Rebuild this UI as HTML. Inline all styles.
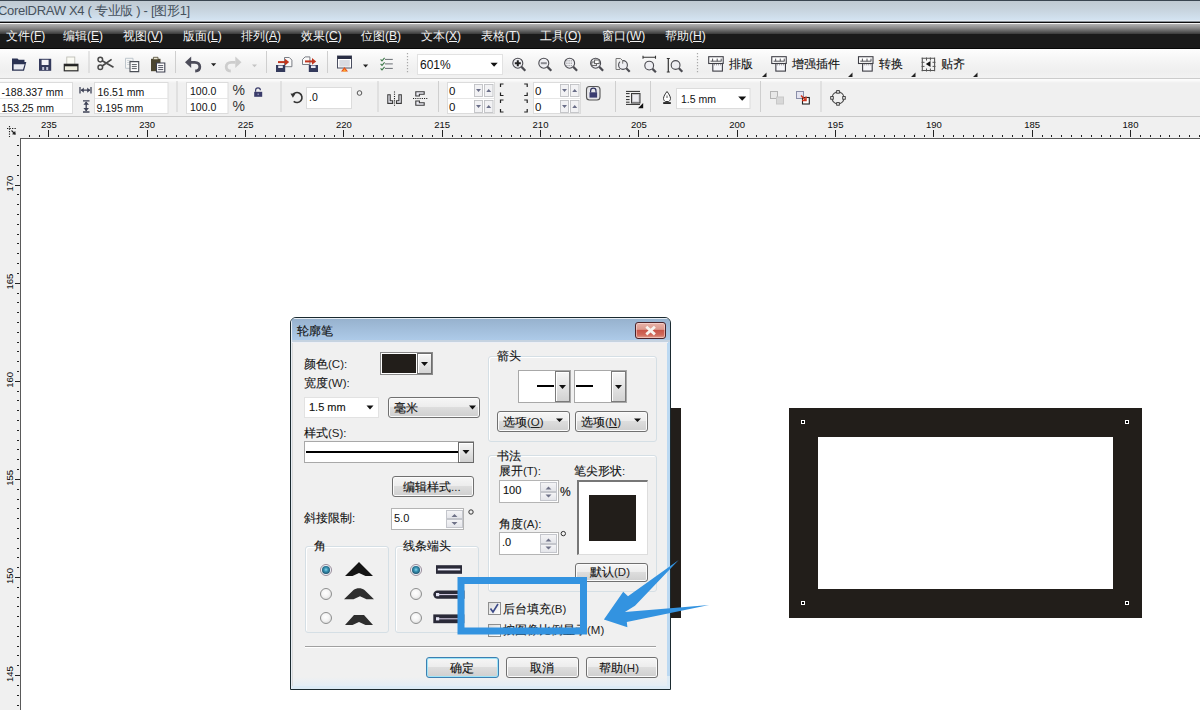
<!DOCTYPE html>
<html><head><meta charset="utf-8">
<style>
*{margin:0;padding:0;box-sizing:border-box}
html,body{width:1200px;height:710px;overflow:hidden}
body{position:relative;background:#fff;font-family:"Liberation Sans",sans-serif;font-size:12px;color:#000}
.a{position:absolute}
.t{position:absolute;white-space:nowrap;line-height:1}
svg{position:absolute;overflow:visible}
</style></head><body>

<!-- title bar -->
<div class="a" style="left:0;top:0;width:1200px;height:22px;background:linear-gradient(#3a4550 0,#3a4550 1px,#c0cad2 1px,#c6d2dc 40%,#d3e3f1 20px,#e2eaf2 20px,#e2eaf2 21px,#8a9299 21px)"></div>
<div class="t" style="left:-2px;top:4px;font-size:13px;color:#46525e;letter-spacing:-0.3px">CorelDRAW X4 ( 专业版 ) - [图形1]</div>

<!-- menu bar -->
<div class="a" style="left:0;top:22px;width:1200px;height:27px;background:linear-gradient(#0c0c0c 0,#0c0c0c 1px,#f4f4f4 1px,#f4f4f4 2px,#b4b4b4 2px,#8a8a8a 6px,#3a3a3a 12px,#1a1a1a 12px,#1a1a1a 26px,#080808 26px)"></div>
<div id="menu" style="color:#f2f2f2;font-size:12px">
<div class="t" style="left:6px;top:30px">文件(<u>F</u>)</div>
<div class="t" style="left:63px;top:30px">编辑(<u>E</u>)</div>
<div class="t" style="left:123px;top:30px">视图(<u>V</u>)</div>
<div class="t" style="left:183px;top:30px">版面(<u>L</u>)</div>
<div class="t" style="left:241px;top:30px">排列(<u>A</u>)</div>
<div class="t" style="left:301px;top:30px">效果(<u>C</u>)</div>
<div class="t" style="left:361px;top:30px">位图(<u>B</u>)</div>
<div class="t" style="left:421px;top:30px">文本(<u>X</u>)</div>
<div class="t" style="left:481px;top:30px">表格(<u>T</u>)</div>
<div class="t" style="left:540px;top:30px">工具(<u>O</u>)</div>
<div class="t" style="left:602px;top:30px">窗口(<u>W</u>)</div>
<div class="t" style="left:665px;top:30px">帮助(<u>H</u>)</div>
</div>

<!-- toolbar 1 -->
<div class="a" style="left:0;top:49px;width:1200px;height:30px;background:linear-gradient(#fefefe 0,#f6f6f6 10px,#efefef 22px,#f2f2f2 100%);border-bottom:1px solid #cccccc"></div>

<!-- toolbar1 icons -->
<svg style="left:0;top:0" width="1200" height="80">
<g fill="none">
<!-- grip left -->
<!-- open folder -->
<path d="M12 58.5h5.5l1.2 1.3h5.8v3H12z" fill="#2a3252"/>
<path d="M12 62h14.3l-2.3 8.8H12z" fill="#2a3252"/>
<path d="M13.6 64.2h11l-1.6 5.2h-9.4z" fill="#e9ebf2"/>
<!-- save -->
<rect x="39" y="58.8" width="12.2" height="12" fill="#343a5c"/>
<rect x="41.6" y="59.8" width="7" height="5.2" fill="#f4f4f8"/>
<rect x="42.2" y="67" width="2" height="3" fill="#c0c4d8"/>
<rect x="46.2" y="67" width="2" height="3" fill="#c0c4d8"/>
<!-- print -->
<rect x="66.8" y="57" width="8" height="8" fill="#fbfbf4" stroke="#b8b8b0" stroke-width="0.8"/>
<rect x="64.3" y="64.3" width="13.6" height="6.5" fill="#efeee0" stroke="#2c2c2c" stroke-width="1.2"/>
<rect x="64.3" y="64.3" width="13.6" height="2" fill="#222"/>
<!-- separators -->
<rect x="88.5" y="51" width="1" height="22" fill="#cfcfcf"/>
<rect x="175" y="51" width="1" height="22" fill="#cfcfcf"/>
<rect x="266" y="51" width="1" height="22" fill="#cfcfcf"/>
<rect x="327" y="51" width="1" height="22" fill="#cfcfcf"/>
<!-- scissors -->
<circle cx="100.3" cy="59.6" r="2.3" stroke="#4a4a4a" stroke-width="1.5"/>
<circle cx="100.3" cy="67.2" r="2.3" stroke="#4a4a4a" stroke-width="1.5"/>
<path d="M102.2 60.8L113.5 67.2M102.2 66L111.6 59.4" stroke="#4a4a4a" stroke-width="1.7"/>
<!-- copy -->
<path d="M125.5 58.3h7.5v10h-7.5z" fill="#f6f6f6" stroke="#b9c2c8" stroke-width="0.9"/>
<path d="M127 60.5h4.5M127 62.5h4.5M127 64.5h4.5" stroke="#c7cfd4" stroke-width="0.8"/>
<path d="M130 61.6h8.7v10H130z" fill="#fff" stroke="#4a4e55" stroke-width="1.1"/>
<path d="M131.8 64.6h5M131.8 66.6h5M131.8 68.6h5" stroke="#4a4e55" stroke-width="0.9"/>
<!-- paste -->
<path d="M151 58.8h9.5v12.4H151z" fill="#4c4631"/>
<path d="M153.4 57.3h4.6v2.4h-4.6z" fill="#e8e4d0" stroke="#4c4631" stroke-width="0.8"/>
<path d="M156.5 63h8.3v9h-8.3z" fill="#fff" stroke="#3e4150" stroke-width="1.1"/>
<path d="M158.2 65.6h5M158.2 67.6h5M158.2 69.6h5" stroke="#3e4150" stroke-width="0.9"/>
<!-- undo -->
<path d="M190.5 62.3h4.3c3 0 5 1.8 5 4.5s-2 4.2-4.6 4.2" stroke="#4d4d5a" stroke-width="2.8"/>
<path d="M185 62.3l6.2-5.8v11.6z" fill="#4d4d5a"/>
<path d="M211 63.2h5.2l-2.6 3z" fill="#222"/>
<!-- redo -->
<path d="M235.5 62.3h-4.3c-3 0-5 1.8-5 4.5s2 4.2 4.6 4.2" stroke="#cdcdcd" stroke-width="2.8"/>
<path d="M241.5 62.3l-6.2-5.8v11.6z" fill="#cdcdcd"/>
<path d="M252 64.4h5l-2.5 2.8z" fill="#c4c4c4"/>
<!-- import -->
<path d="M284.5 57.5h4.8l2.6 2.6v6.6h-7.4z" fill="#fafafa" stroke="#6c7078" stroke-width="0.9"/>
<rect x="276" y="65" width="9.2" height="7" fill="#343a5c"/>
<rect x="278.2" y="65.6" width="4.6" height="2.4" fill="#e9e9f2"/>
<path d="M278 62.1h7" stroke="#c0361e" stroke-width="2"/>
<path d="M289.2 62.1l-4.2-3.3v6.6z" fill="#c0361e"/>
<!-- export -->
<path d="M302.5 59.5l2.6-2.6h4.8v7.6h-7.4z" fill="#fafafa" stroke="#6c7078" stroke-width="0.9"/>
<rect x="308.8" y="65" width="9.2" height="7" fill="#343a5c"/>
<rect x="311" y="65.6" width="4.6" height="2.4" fill="#e9e9f2"/>
<path d="M305 61.4h7" stroke="#c0361e" stroke-width="2"/>
<path d="M316.2 61.4l-4.2-3.3v6.6z" fill="#c0361e"/>
<!-- app launcher -->
<rect x="337.5" y="56" width="14" height="12" fill="#fff" stroke="#4a4e60" stroke-width="1"/>
<rect x="337.5" y="56" width="14" height="3" fill="#2a2e44"/>
<rect x="339.3" y="60" width="10.5" height="6.6" fill="#d9dbe2"/>
<path d="M341 71.5l3.5-4.5 3.5 4.5z" fill="#e8501c"/>
<path d="M342.6 71.5l1.9-2.6 1.9 2.6z" fill="#ffb030"/>
<path d="M363 64.4h5.2l-2.6 3z" fill="#222"/>
<!-- checklist -->
<path d="M380.6 59.3l1.4 1.6 2.6-3M380.6 63.8l1.4 1.6 2.6-3M380.6 68.3l1.4 1.6 2.6-3" stroke="#3f7a4a" stroke-width="1.1"/>
<path d="M385 59.4h7.8M385 63.9h7.8M385 68.4h7.8" stroke="#6a6e74" stroke-width="1"/>
<!-- grip -->
<path d="M407.5 53v21" stroke="#a9a9a9" stroke-width="1.2" stroke-dasharray="1.2 1.8"/>
<path d="M697.5 53v21" stroke="#a9a9a9" stroke-width="1.2" stroke-dasharray="1.2 1.8"/>
<!-- zoom combo -->
<rect x="417.5" y="54.5" width="85" height="20" fill="#fff" stroke="#e2e2e2" stroke-width="1"/>
<path d="M490.5 62.8h7.2l-3.6 4z" fill="#111"/>
<!-- magnifiers -->
<g stroke="#4c4c52" stroke-width="1.1" fill="#eeeef2">
<circle cx="517.8" cy="63.2" r="5"/><path d="M521.5 66.9l3.8 3.8" stroke-width="2.2"/>
<circle cx="543.8" cy="63.2" r="5"/><path d="M547.5 66.9l3.8 3.8" stroke-width="2.2"/>
<circle cx="569.6" cy="63.2" r="5"/><path d="M573.3 66.9l3.8 3.8" stroke-width="2.2"/>
<circle cx="595.6" cy="63.2" r="5"/><path d="M599.3 66.9l3.8 3.8" stroke-width="2.2"/>
<circle cx="623" cy="65" r="4.4"/><path d="M626.3 68.3l3.4 3.4" stroke-width="2.2"/>
<circle cx="649.2" cy="65.6" r="4.4"/><path d="M652.5 68.9l3.4 3.4" stroke-width="2.2"/>
<circle cx="675.6" cy="65" r="4.4"/><path d="M678.9 68.3l3.4 3.4" stroke-width="2.2"/>
</g>
<path d="M514.8 63.2h6M517.8 60.2v6" stroke="#222" stroke-width="2"/>
<path d="M540.8 63.2h6" stroke="#8a8a90" stroke-width="2"/>
<path d="M566.4 60.8h6.4M566.4 63.2h6.4M566.4 65.6h6.4" stroke="#666" stroke-width="0.8" stroke-dasharray="1 1.2"/>
<rect x="591.8" y="62" width="4.6" height="3.6" fill="none" stroke="#555" stroke-width="0.9"/>
<rect x="594.6" y="60" width="4.6" height="3.6" fill="#fff" stroke="#555" stroke-width="0.9"/>
<path d="M616 58.5h4.5l2.2 2.2v3" fill="#eee" stroke="#777" stroke-width="1"/>
<path d="M616 58.5v11h4" stroke="#777" stroke-width="1"/>
<path d="M643 57.3h12.5M643 55.8v3M655.5 55.8v3" stroke="#333" stroke-width="1.1"/>
<path d="M668.3 58.5v13.5M666.8 58.5h3M666.8 72h3" stroke="#333" stroke-width="1.2"/>
<!-- tool bar labels icons -->
<g transform="translate(0.00 0)"><rect x="708.7" y="56.7" width="14.5" height="6.8" fill="#fff" stroke="#3e3e46" stroke-width="1.1"/><path d="M710.5 61.2h11M712.6 58.6v2.6M717.2 58.6v2.6M721.2 58.6v2.6" stroke="#3e3e46" stroke-width="0.9" fill="none"/><rect x="712.8" y="63.5" width="9.6" height="7.6" fill="#f6f6fa" stroke="#3e3e46" stroke-width="1.1"/><path d="M714 64.8h7.5" stroke="#666" stroke-width="0.8" stroke-dasharray="1 1"/></g>
<g transform="translate(63.05 0)"><rect x="708.7" y="56.7" width="14.5" height="6.8" fill="#fff" stroke="#3e3e46" stroke-width="1.1"/><path d="M710.5 61.2h11M712.6 58.6v2.6M717.2 58.6v2.6M721.2 58.6v2.6" stroke="#3e3e46" stroke-width="0.9" fill="none"/><rect x="712.8" y="63.5" width="9.6" height="7.6" fill="#f6f6fa" stroke="#3e3e46" stroke-width="1.1"/><path d="M714 64.8h7.5" stroke="#666" stroke-width="0.8" stroke-dasharray="1 1"/></g>
<g transform="translate(149.80 0)"><rect x="708.7" y="56.7" width="14.5" height="6.8" fill="#fff" stroke="#3e3e46" stroke-width="1.1"/><path d="M710.5 61.2h11M712.6 58.6v2.6M717.2 58.6v2.6M721.2 58.6v2.6" stroke="#3e3e46" stroke-width="0.9" fill="none"/><rect x="712.8" y="63.5" width="9.6" height="7.6" fill="#f6f6fa" stroke="#3e3e46" stroke-width="1.1"/><path d="M714 64.8h7.5" stroke="#666" stroke-width="0.8" stroke-dasharray="1 1"/></g>
<path d="M921.5 58.3h13.5M921.5 70.5h13.5M922.3 57.5v13.8M934.6 57.5v13.8" stroke="#555" stroke-width="1.1" fill="none"/>
<path d="M926.5 57.5v3M930.4 57.5v3M926.5 68.5v3M930.4 68.5v3M921.5 62.3h3M921.5 66.4h3M932.5 62.3h3M932.5 66.4h3" stroke="#555" stroke-width="1" fill="none"/>
<path d="M925.8 64l4.7-3v6z" fill="#111"/>
<path d="M762 77h4.5v-4.5z M848 77h4.5v-4.5z M911 77h4.5v-4.5z M973 77h4.5v-4.5z" fill="#222"/>
</g>
</svg>
<div class="t" style="left:420px;top:59px;font-size:12px;color:#111">601%</div>
<div class="t" style="left:729px;top:58px;font-size:12px;color:#111;-webkit-text-stroke:0.12px #111">排版</div>
<div class="t" style="left:792px;top:58px;font-size:12px;color:#111;-webkit-text-stroke:0.12px #111">增强插件</div>
<div class="t" style="left:879px;top:58px;font-size:12px;color:#111;-webkit-text-stroke:0.12px #111">转换</div>
<div class="t" style="left:941px;top:58px;font-size:12px;color:#111;-webkit-text-stroke:0.12px #111">贴齐</div>

<!-- toolbar 2 -->
<div class="a" style="left:0;top:79px;width:1200px;height:38px;background:linear-gradient(#fcfcfc 0,#fcfcfc 1px,#f0f0f0 4px);border-bottom:1px solid #c9c9c9"></div>


<!-- toolbar2 content -->
<svg style="left:0;top:0" width="1200" height="118">
<g fill="#fff" stroke="#dcdcdc" stroke-width="1">
<rect x="-1" y="82.5" width="73.5" height="31"/>
<rect x="94.5" y="82.5" width="73.5" height="31"/>
<rect x="186.5" y="82.5" width="41.5" height="31"/>
<rect x="306.5" y="87.5" width="45" height="21"/>
<rect x="447.5" y="82.5" width="47" height="31"/>
<rect x="533.5" y="82.5" width="47" height="31"/>
<rect x="676.5" y="88.5" width="73.5" height="20"/>
</g>
<path d="M0 98.5h72M95 98.5h73M187 98.5h41M448 98.5h46M534 98.5h46" stroke="#e6e6e6" stroke-width="1"/>
<g fill="#cfcfcf">
<rect x="176.5" y="81" width="1" height="31"/>
<rect x="280.5" y="81" width="1" height="31"/>
<rect x="377.5" y="81" width="1" height="31"/>
<rect x="438" y="81" width="1" height="31"/>
<rect x="615" y="81" width="1" height="31"/>
<rect x="650" y="81" width="1" height="31"/>
<rect x="760" y="81" width="1" height="31"/>
<rect x="820.5" y="81" width="1" height="31"/>
</g>
<!-- W/H icons -->
<path d="M80 87v6.5M91 87v6.5M81 90.2h9" stroke="#3e4256" stroke-width="1.3"/>
<path d="M80.8 90.2l3-2.6v5.2zM90.2 90.2l-3-2.6v5.2z" fill="#3e4256"/>
<path d="M83 100.8h6.5M83 112h6.5M86.2 102v9" stroke="#3e4256" stroke-width="1.3"/>
<path d="M86.2 101.5l-2.8 3.2h5.6zM86.2 111.3l-2.8-3.2h5.6z" fill="#3e4256"/>
<!-- lock small -->
<path d="M255.6 91.8v-1.6a2.4 2.4 0 0 1 4.8 0" fill="none" stroke="#3a3c6a" stroke-width="1.2"/>
<rect x="254.2" y="91.8" width="8" height="5" fill="#3a3c6a"/><rect x="257.5" y="93.5" width="1.4" height="1.6" fill="#9090b8"/>
<!-- rotate icon -->
<path d="M292.5 95.3a5 5 0 1 1 1.2 6" fill="none" stroke="#333" stroke-width="1.6"/>
<path d="M290.5 93.5l5 0.2-2.6 4z" fill="#333"/>
<!-- mirror icons -->
<path d="M394.5 91.5v15" stroke="#222" stroke-width="1.1" stroke-dasharray="1.1 1.1"/>
<path d="M387.8 94.8h2.4v6h2.4v2.6h-4.8z M401.3 94.8h-2.4v6h-2.4v2.6h4.8z" fill="#ececf4" stroke="#3a3a3a" stroke-width="1.1"/>
<path d="M413 98.5h15" stroke="#222" stroke-width="1.1" stroke-dasharray="1.1 1.1"/>
<path d="M415.8 91.8h8.4v2.4h-4.8v1.8h-3.6z M415.8 105.2h8.4v-2.4h-4.8v-1.8h-3.6z" fill="#ececf4" stroke="#3a3a3a" stroke-width="1.1"/>
<!-- spinners -->
<g fill="#f2f2f4" stroke="#bfc0c4" stroke-width="0.9">
<rect x="474.5" y="84.5" width="8" height="12"/><rect x="484.5" y="84.5" width="8.5" height="12"/>
<rect x="474.5" y="100.5" width="8" height="12"/><rect x="484.5" y="100.5" width="8.5" height="12"/>
<rect x="560.5" y="84.5" width="8" height="12"/><rect x="570.5" y="84.5" width="8.5" height="12"/>
<rect x="560.5" y="100.5" width="8" height="12"/><rect x="570.5" y="100.5" width="8.5" height="12"/>
</g>
<path d="M476 89h5l-2.5 3zM476 105h5l-2.5 3zM562 89h5l-2.5 3zM562 105h5l-2.5 3z" fill="#6a6e88"/>
<path d="M486.2 92h5l-2.5-3zM486.2 108h5l-2.5-3zM572.2 92h5l-2.5-3zM572.2 108h5l-2.5-3z" fill="#6a6e88"/>
<!-- brackets -->
<path d="M503.5 84h-3v3M500.5 92.5v3h3M503.5 100h-3v3M500.5 109v3h3M524.2 84h3v3M527.2 92.5v3h-3M524.2 100h3v3M527.2 109v3h-3" fill="none" stroke="#222" stroke-width="1.2"/>
<!-- lock button -->
<rect x="586.5" y="86.5" width="13.5" height="13.5" rx="3" fill="#e6e6ea" stroke="#555" stroke-width="1.1"/>
<path d="M590.6 92.5v-1.6a2.7 2.7 0 0 1 5.4 0v1.6" fill="none" stroke="#303460" stroke-width="1.2"/>
<rect x="589.5" y="92.3" width="7.6" height="5.3" fill="#3a3c70"/>
<!-- wrap text icon -->
<path d="M626 91.4h14M626 104.4h14M626 93.6h3.6M626 96.6h3.6M626 99.6h3.6M626 102.2h3.6" stroke="#2a2a2a" stroke-width="1"/>
<rect x="631.5" y="93.5" width="8.5" height="9.5" fill="#c4c4c8" stroke="#3a3a3a" stroke-width="1"/>
<rect x="633" y="95" width="5.5" height="6.5" fill="#ececf0"/>
<path d="M643.2 108.2v-5.2l-5.2 5.2z" fill="#111"/>
<!-- pen nib -->
<path d="M667 91.5c-1.6 2-3.5 5-3.5 7 0 1.5 1 2.6 2 3h3c1-.4 2-1.5 2-3 0-2-1.9-5-3.5-7z" fill="#fff" stroke="#333" stroke-width="1"/>
<path d="M667 95.5v2.5" stroke="#555" stroke-width="1"/>
<rect x="663.2" y="102.2" width="7.6" height="1.7" fill="#111"/>
<!-- combo arrow -->
<path d="M738.2 96.6h8l-4 4.2z" fill="#111"/>
<!-- order icons -->
<rect x="770.5" y="91.5" width="7" height="7" fill="#e8e8e8" stroke="#b4b4b4" stroke-width="1"/>
<rect x="776.5" y="97" width="7" height="7" fill="#d8d8d8" stroke="#c8c8c8" stroke-width="1"/>
<rect x="796.5" y="91.5" width="7" height="7" fill="#e4e4f0" stroke="#8a8ea8" stroke-width="1"/>
<rect x="802.5" y="97.5" width="6.8" height="6.5" fill="#fff" stroke="#222" stroke-width="1.1"/>
<path d="M801 95.5l4.5 4.5M806 96.5v4h-4" fill="none" stroke="#d03820" stroke-width="1.5"/>
<circle cx="359.5" cy="93" r="2.3" fill="none" stroke="#555" stroke-width="1"/>
<!-- circle nodes -->
<circle cx="838" cy="97.9" r="6" fill="none" stroke="#555" stroke-width="1.1"/>
<g fill="#f4f4f4" stroke="#333" stroke-width="0.9"><rect x="836.7" y="90.6" width="2.6" height="2.6"/><rect x="836.7" y="102.6" width="2.6" height="2.6"/><rect x="830.7" y="96.6" width="2.6" height="2.6"/><rect x="842.7" y="96.6" width="2.6" height="2.6"/></g>
</svg>
<div style="font-size:10.5px;color:#111">
<div class="t" style="left:1.5px;top:86.5px">-188.337 mm</div>
<div class="t" style="left:1.5px;top:102.5px">153.25 mm</div>
<div class="t" style="left:97.5px;top:86.5px">16.51 mm</div>
<div class="t" style="left:96.5px;top:102.5px">9.195 mm</div>
<div class="t" style="left:190px;top:86px">100.0</div>
<div class="t" style="left:190px;top:102px">100.0</div>
<div class="t" style="left:232.5px;top:82.5px;font-size:14px;color:#333">%</div>
<div class="t" style="left:232.5px;top:99px;font-size:14px;color:#333">%</div>
<div class="t" style="left:309px;top:91.5px">.0</div>

<div class="t" style="left:449px;top:86px;font-size:11.5px">0</div>
<div class="t" style="left:449px;top:102px;font-size:11.5px">0</div>
<div class="t" style="left:535px;top:86px;font-size:11.5px">0</div>
<div class="t" style="left:535px;top:102px;font-size:11.5px">0</div>
<div class="t" style="left:681px;top:93.5px;font-size:10.5px">1.5 mm</div>
</div>

<!-- rulers -->
<div class="a" style="left:0;top:117px;width:1200px;height:21px;background:#f0f0f0"></div>
<div class="a" style="left:0;top:117px;width:21px;height:593px;background:#f0f0f0"></div>
<div class="a" style="left:20px;top:138px;width:1180px;height:1px;background:#5a5a5a"></div>
<div class="a" style="left:20px;top:138px;width:1px;height:572px;background:#5a5a5a"></div>

<svg style="left:0;top:0" width="1200" height="710">
<path d="M29.5 135v2 M39.5 135v2 M48.5 130v7 M58.5 135v2 M68.5 135v2 M78.5 135v2 M88.5 135v2 M98.5 135v2 M107.5 135v2 M117.5 135v2 M127.5 135v2 M137.5 135v2 M147.5 130v7 M157.5 135v2 M166.5 135v2 M176.5 135v2 M186.5 135v2 M196.5 135v2 M206.5 135v2 M216.5 135v2 M225.5 135v2 M235.5 135v2 M245.5 130v7 M255.5 135v2 M265.5 135v2 M275.5 135v2 M284.5 135v2 M294.5 135v2 M304.5 135v2 M314.5 135v2 M324.5 135v2 M334.5 135v2 M343.5 130v7 M353.5 135v2 M363.5 135v2 M373.5 135v2 M383.5 135v2 M393.5 135v2 M402.5 135v2 M412.5 135v2 M422.5 135v2 M432.5 135v2 M442.5 130v7 M452.5 135v2 M461.5 135v2 M471.5 135v2 M481.5 135v2 M491.5 135v2 M501.5 135v2 M511.5 135v2 M520.5 135v2 M530.5 135v2 M540.5 130v7 M550.5 135v2 M560.5 135v2 M570.5 135v2 M579.5 135v2 M589.5 135v2 M599.5 135v2 M609.5 135v2 M619.5 135v2 M629.5 135v2 M638.5 130v7 M648.5 135v2 M658.5 135v2 M668.5 135v2 M678.5 135v2 M688.5 135v2 M697.5 135v2 M707.5 135v2 M717.5 135v2 M727.5 135v2 M737.5 130v7 M747.5 135v2 M756.5 135v2 M766.5 135v2 M776.5 135v2 M786.5 135v2 M796.5 135v2 M806.5 135v2 M815.5 135v2 M825.5 135v2 M835.5 130v7 M845.5 135v2 M855.5 135v2 M865.5 135v2 M874.5 135v2 M884.5 135v2 M894.5 135v2 M904.5 135v2 M914.5 135v2 M924.5 135v2 M933.5 130v7 M943.5 135v2 M953.5 135v2 M963.5 135v2 M973.5 135v2 M983.5 135v2 M992.5 135v2 M1002.5 135v2 M1012.5 135v2 M1022.5 135v2 M1032.5 130v7 M1042.5 135v2 M1051.5 135v2 M1061.5 135v2 M1071.5 135v2 M1081.5 135v2 M1091.5 135v2 M1101.5 135v2 M1110.5 135v2 M1120.5 135v2 M1130.5 130v7 M1140.5 135v2 M1150.5 135v2 M1160.5 135v2 M1169.5 135v2 M1179.5 135v2 M1189.5 135v2 M1199.5 135v2 M17 145.5h2 M17 155.5h2 M17 165.5h2 M17 175.5h2 M15 185.5h5 M17 194.5h2 M17 204.5h2 M17 214.5h2 M17 224.5h2 M17 234.5h2 M17 243.5h2 M17 253.5h2 M17 263.5h2 M17 273.5h2 M15 283.5h5 M17 293.5h2 M17 302.5h2 M17 312.5h2 M17 322.5h2 M17 332.5h2 M17 342.5h2 M17 351.5h2 M17 361.5h2 M17 371.5h2 M15 381.5h5 M17 391.5h2 M17 400.5h2 M17 410.5h2 M17 420.5h2 M17 430.5h2 M17 440.5h2 M17 449.5h2 M17 459.5h2 M17 469.5h2 M15 479.5h5 M17 489.5h2 M17 499.5h2 M17 508.5h2 M17 518.5h2 M17 528.5h2 M17 538.5h2 M17 548.5h2 M17 557.5h2 M17 567.5h2 M15 577.5h5 M17 587.5h2 M17 597.5h2 M17 606.5h2 M17 616.5h2 M17 626.5h2 M17 636.5h2 M17 646.5h2 M17 655.5h2 M17 665.5h2 M15 675.5h5 M17 685.5h2 M17 695.5h2 M17 705.5h2" stroke="#222" stroke-width="1" fill="none"/>
<text x="48.9" y="128.4" font-size="9.5" text-anchor="middle" fill="#111" stroke="#111" stroke-width="0.05" font-family="Liberation Sans">235</text>
<text x="147.2" y="128.4" font-size="9.5" text-anchor="middle" fill="#111" stroke="#111" stroke-width="0.05" font-family="Liberation Sans">230</text>
<text x="245.6" y="128.4" font-size="9.5" text-anchor="middle" fill="#111" stroke="#111" stroke-width="0.05" font-family="Liberation Sans">225</text>
<text x="343.9" y="128.4" font-size="9.5" text-anchor="middle" fill="#111" stroke="#111" stroke-width="0.05" font-family="Liberation Sans">220</text>
<text x="442.2" y="128.4" font-size="9.5" text-anchor="middle" fill="#111" stroke="#111" stroke-width="0.05" font-family="Liberation Sans">215</text>
<text x="540.5" y="128.4" font-size="9.5" text-anchor="middle" fill="#111" stroke="#111" stroke-width="0.05" font-family="Liberation Sans">210</text>
<text x="638.9" y="128.4" font-size="9.5" text-anchor="middle" fill="#111" stroke="#111" stroke-width="0.05" font-family="Liberation Sans">205</text>
<text x="737.2" y="128.4" font-size="9.5" text-anchor="middle" fill="#111" stroke="#111" stroke-width="0.05" font-family="Liberation Sans">200</text>
<text x="835.5" y="128.4" font-size="9.5" text-anchor="middle" fill="#111" stroke="#111" stroke-width="0.05" font-family="Liberation Sans">195</text>
<text x="933.9" y="128.4" font-size="9.5" text-anchor="middle" fill="#111" stroke="#111" stroke-width="0.05" font-family="Liberation Sans">190</text>
<text x="1032.2" y="128.4" font-size="9.5" text-anchor="middle" fill="#111" stroke="#111" stroke-width="0.05" font-family="Liberation Sans">185</text>
<text x="1130.5" y="128.4" font-size="9.5" text-anchor="middle" fill="#111" stroke="#111" stroke-width="0.05" font-family="Liberation Sans">180</text>
<text transform="translate(13.3 183.6) rotate(-90)" font-size="9.5" text-anchor="middle" fill="#111" stroke="#111" stroke-width="0.05" font-family="Liberation Sans">170</text>
<text transform="translate(13.3 281.7) rotate(-90)" font-size="9.5" text-anchor="middle" fill="#111" stroke="#111" stroke-width="0.05" font-family="Liberation Sans">165</text>
<text transform="translate(13.3 379.8) rotate(-90)" font-size="9.5" text-anchor="middle" fill="#111" stroke="#111" stroke-width="0.05" font-family="Liberation Sans">160</text>
<text transform="translate(13.3 477.9) rotate(-90)" font-size="9.5" text-anchor="middle" fill="#111" stroke="#111" stroke-width="0.05" font-family="Liberation Sans">155</text>
<text transform="translate(13.3 576.0) rotate(-90)" font-size="9.5" text-anchor="middle" fill="#111" stroke="#111" stroke-width="0.05" font-family="Liberation Sans">150</text>
<text transform="translate(13.3 674.1) rotate(-90)" font-size="9.5" text-anchor="middle" fill="#111" stroke="#111" stroke-width="0.05" font-family="Liberation Sans">145</text>
<path d="M9.5 126v11M7 128.5h10" stroke="#222" stroke-width="1.1" stroke-dasharray="1.3 1.2" fill="none"/><path d="M11.5 130.5l3.5 3.5" stroke="#222" stroke-width="1.1"/><path d="M15.8 134.8l-3.8-0.6 3.2-3.2z" fill="#222"/>
</svg>
<!-- canvas rectangle -->
<div class="a" style="left:789px;top:408px;width:353px;height:210px;background:#221e1a"></div>
<div class="a" style="left:818px;top:437px;width:295px;height:152px;background:#fff"></div>
<div class="a" style="left:801px;top:420px;width:4px;height:4px;background:#fff"><div style="position:absolute;left:1px;top:1px;width:2px;height:2px;background:#000"></div></div>
<div class="a" style="left:1125px;top:420px;width:4px;height:4px;background:#fff"><div style="position:absolute;left:1px;top:1px;width:2px;height:2px;background:#000"></div></div>
<div class="a" style="left:801px;top:601px;width:4px;height:4px;background:#fff"><div style="position:absolute;left:1px;top:1px;width:2px;height:2px;background:#000"></div></div>
<div class="a" style="left:1125px;top:601px;width:4px;height:4px;background:#fff"><div style="position:absolute;left:1px;top:1px;width:2px;height:2px;background:#000"></div></div>
<!-- partial rect behind dialog -->
<div class="a" style="left:660px;top:408px;width:21px;height:210px;background:#221e1a"></div>

<!-- dialog -->
<style>
.btn{position:absolute;border:1px solid #707070;border-radius:3px;background:linear-gradient(#f6f6f6 0,#ededed 45%,#dddddd 50%,#cfcfcf 100%);box-shadow:inset 0 0 0 1px #fbfbfb}
.inp{position:absolute;background:#fff;border:1px solid #abadb3;border-color:#abadb3 #dbdfe6 #e3e9ef #e2e3ea}
.grp{position:absolute;border:1px solid #d5dfe5;border-radius:3px;box-shadow:1px 1px 0 #fff inset}
.lbl{position:absolute;white-space:nowrap;line-height:1;font-size:12px;color:#111;-webkit-text-stroke:0.12px #111}
.lbl i{font-style:normal;font-size:11.5px;-webkit-text-stroke:0;color:#222}
u{text-decoration:underline;text-underline-offset:1px}
.spin{position:absolute;border:1px solid #c4c6cc;background:linear-gradient(#f4f4f6,#e4e5ea)}
.rad{position:absolute;width:12px;height:12px;border-radius:50%;border:1px solid #8e8f8f;background:radial-gradient(circle at 45% 40%,#ffffff 0,#f4f4f4 45%,#cfcfcf 100%)}
.rad.on{border-color:#9a8c9a;background:#eef4f8}
.rad.on::after{content:"";position:absolute;left:1px;top:1px;width:8px;height:8px;border-radius:50%;background:radial-gradient(circle at 50% 45%,#8fd4e8 0,#3a98b8 30%,#1a4e6a 75%,#23405a 100%)}
</style>
<div class="a" style="left:290px;top:317px;width:381px;height:373px;border:1px solid #1b2a30;border-radius:6px 6px 0 0;background:#bcd9f2;overflow:hidden">
  <div class="a" style="left:0;top:0;width:379px;height:1px;background:#e8eef4"></div>
  <div class="a" style="left:0;top:1px;width:379px;height:21px;background:linear-gradient(#97b2ce,#adcae8)"></div>
  <div class="a" style="left:0;top:22px;width:379px;height:2px;background:#c6d3e0"></div>
  <div class="a" style="left:1px;top:24px;width:376px;height:1px;background:#eceff6"></div>
  <div class="a" style="left:0;top:358px;width:379px;height:13px;background:#dcebf6"></div>
  <div class="a" style="left:1px;top:25px;width:375px;height:343px;background:linear-gradient(#f0f0f0 0,#f0f0f0 334px,#e4eef6 343px)"></div>
  <div class="a" style="left:0;top:0;width:1px;height:371px;background:#e8eef4"></div>
  <div class="a" style="left:1px;top:25px;width:1px;height:343px;background:#dadada"></div>
</div>
<div class="lbl" style="left:297px;top:325px">轮廓笔</div>
<!-- close button -->
<div class="a" style="left:635px;top:322px;width:31px;height:17px;border:1px solid #4a2228;border-radius:3px;background:linear-gradient(#e8b2a8 0,#dc9a8e 42%,#c8564a 50%,#d06a5c 80%,#e0a090 100%);box-shadow:inset 0 0 0 1px rgba(255,230,230,.5)"></div>
<svg style="left:0;top:0" width="1200" height="710">
<path d="M646.3 326.8l8.6 7.6M654.9 326.8l-8.6 7.6" stroke="#f8f4f0" stroke-width="2.8"/>
</svg>

<!-- left column -->
<div class="lbl" style="left:304px;top:358px">颜色<i>(C):</i></div>
<div class="a" style="left:380px;top:352px;width:53px;height:23px;border:1px solid #8a8a8a;background:#fff"></div>
<div class="a" style="left:382px;top:354px;width:34px;height:19px;background:#221e1a"></div>
<div class="a" style="left:416.5px;top:353px;width:15.5px;height:21px;border:1px solid #6e6e6e;box-shadow:inset 1px 1px 0 #fff;background:linear-gradient(#f8f8f8,#d4d4d4)"></div>
<div class="lbl" style="left:304px;top:377px">宽度<i>(W):</i></div>
<div class="inp" style="left:304px;top:397px;width:75px;height:21px;border-color:#e2e2e2"></div>
<div class="lbl" style="left:309px;top:402px;font-size:11px">1.5 mm</div>
<div class="btn" style="left:388px;top:397px;width:92px;height:21px"></div>
<div class="lbl" style="left:394px;top:402px">毫米</div>
<div class="lbl" style="left:304px;top:427px">样式<i>(S):</i></div>
<div class="inp" style="left:304px;top:441px;width:170px;height:22px;border:1px solid #a8a8a8"></div>
<div class="a" style="left:306px;top:450.5px;width:152px;height:2px;background:#000"></div>
<div class="a" style="left:458px;top:442px;width:16px;height:21px;border:1px solid #6a6a6a;box-shadow:inset 1px 1px 0 #fff;background:linear-gradient(#f6f6f6,#d0d0d0)"></div>
<div class="btn" style="left:392px;top:476px;width:82px;height:21px"></div>
<div class="lbl" style="left:403px;top:481px">编辑样式<i>...</i></div>
<div class="lbl" style="left:304px;top:512px">斜接限制<i>:</i></div>
<div class="inp" style="left:391px;top:508px;width:73px;height:22px;border:1px solid #b4b4b4"></div>
<div class="lbl" style="left:394px;top:513px;font-size:11px;-webkit-text-stroke:0">5.0</div>
<div class="spin" style="left:446px;top:510px;width:17px;height:9px"></div>
<div class="spin" style="left:446px;top:519px;width:17px;height:9px"></div>


<div class="grp" style="left:305px;top:546px;width:84px;height:87px"></div>
<div class="lbl" style="left:314px;top:540px">角</div>
<div class="grp" style="left:395px;top:546px;width:84px;height:87px"></div>
<div class="lbl" style="left:403px;top:540px">线条端头</div>
<div class="rad on" style="left:320px;top:564px"></div>
<div class="rad" style="left:320px;top:588px"></div>
<div class="rad" style="left:320px;top:612px"></div>
<div class="rad on" style="left:410px;top:564px"></div>
<div class="rad" style="left:410px;top:588px"></div>
<div class="rad" style="left:410px;top:612px"></div>

<!-- right column -->
<div class="grp" style="left:488px;top:356px;width:169px;height:86px"></div>
<div class="lbl" style="left:497px;top:350px">箭头</div>
<div class="a" style="left:518px;top:370px;width:53px;height:33px;border:1px solid #a8a8a8;background:#fff"></div>
<div class="a" style="left:555px;top:371px;width:15px;height:31px;border:1px solid #7a7a7a;box-shadow:inset 1px 1px 0 #fff;background:linear-gradient(#f6f6f6,#d2d2d2)"></div>
<div class="a" style="left:574px;top:370px;width:53px;height:33px;border:1px solid #a8a8a8;background:#fff"></div>
<div class="a" style="left:611px;top:371px;width:15px;height:31px;border:1px solid #7a7a7a;box-shadow:inset 1px 1px 0 #fff;background:linear-gradient(#f6f6f6,#d2d2d2)"></div>
<div class="a" style="left:537px;top:385px;width:17px;height:2px;background:#000"></div>
<div class="a" style="left:576px;top:385px;width:17px;height:2px;background:#000"></div>
<div class="btn" style="left:497px;top:411px;width:73px;height:21px"></div>
<div class="lbl" style="left:503px;top:416px">选项<i>(<u>O</u>)</i></div>
<div class="btn" style="left:575px;top:411px;width:73px;height:21px"></div>
<div class="lbl" style="left:581px;top:416px">选项<i>(<u>N</u>)</i></div>

<div class="grp" style="left:488px;top:455px;width:169px;height:137px"></div>
<div class="lbl" style="left:497px;top:450px">书法</div>
<div class="lbl" style="left:499px;top:465px">展开<i>(T):</i></div>
<div class="inp" style="left:499px;top:480px;width:60px;height:23px;border:1px solid #b4b4b4"></div>
<div class="lbl" style="left:503px;top:485px;font-size:11px">100</div>
<div class="spin" style="left:540px;top:482px;width:17px;height:10px"></div>
<div class="spin" style="left:540px;top:492px;width:17px;height:9px"></div>
<div class="lbl" style="left:560px;top:486px;font-size:12px">%</div>
<div class="lbl" style="left:574px;top:465px">笔尖形状<i>:</i></div>
<div class="a" style="left:577px;top:480px;width:71px;height:75px;background:#fff;border:1px solid #ddd;border-left:2px solid #777;border-top:2px solid #777"></div>
<div class="a" style="left:589px;top:495px;width:47px;height:46px;background:#221e1a"></div>
<div class="lbl" style="left:499px;top:518px">角度<i>(A):</i></div>
<div class="inp" style="left:499px;top:532px;width:60px;height:23px;border:1px solid #b4b4b4"></div>
<div class="lbl" style="left:502px;top:537px;font-size:11px">.0</div>
<div class="spin" style="left:540px;top:534px;width:17px;height:10px"></div>
<div class="spin" style="left:540px;top:544px;width:17px;height:9px"></div>

<div class="btn" style="left:575px;top:563px;width:73px;height:19px"></div>
<div class="lbl" style="left:590px;top:566px">默认<i>(D)</i></div>

<!-- checkboxes -->
<div class="a" style="left:488px;top:602px;width:13px;height:13px;border:1px solid #8e8f8f;background:linear-gradient(135deg,#dcdcdc,#fff)"></div>
<div class="lbl" style="left:503px;top:603px">后台填充<i>(B)</i></div>
<div class="a" style="left:488px;top:624px;width:13px;height:13px;border:1px solid #8e8f8f;background:linear-gradient(135deg,#dcdcdc,#fff)"></div>
<div class="lbl" style="left:503px;top:624px">按图像比例显示<i>(M)</i></div>

<!-- separator -->
<div class="a" style="left:305px;top:646px;width:351px;height:1px;background:#a0a0a0"></div>
<div class="a" style="left:305px;top:647px;width:351px;height:1px;background:#fff"></div>
<!-- buttons -->
<div class="btn" style="left:426px;top:657px;width:73px;height:21px;border-color:#3c7fb1;box-shadow:inset 0 0 0 1px #9ee4f8"></div>
<div class="lbl" style="left:450px;top:662px">确定</div>
<div class="btn" style="left:506px;top:657px;width:73px;height:21px"></div>
<div class="lbl" style="left:530px;top:662px">取消</div>
<div class="btn" style="left:586px;top:657px;width:72px;height:21px"></div>
<div class="lbl" style="left:599px;top:662px">帮助<i>(H)</i></div>

<svg style="left:0;top:0" width="1200" height="710">
<!-- dropdown arrows -->
<path d="M421 362h7l-3.5 4zM366.5 405.5h7l-3.5 4zM469 405.5h7l-3.5 4zM462.5 450h7l-3.5 4zM559 385h7l-3.5 4zM615 385h7l-3.5 4zM556 418.5h7l-3.5 3.5zM634 418.5h7l-3.5 3.5z" fill="#111"/>
<!-- spinner arrows -->
<path d="M451.5 517h6l-3-3zM451.5 522h6l-3 3zM545.5 489.5h6l-3-3zM545.5 494.5h6l-3 3zM545.5 541.5h6l-3-3zM545.5 546.5h6l-3 3z" fill="#6f7288"/>
<!-- join icons -->
<path d="M345 576l14-14 14 14h-7.5l-6.5-3-6.5 3z" fill="#141414"/>
<path d="M344 599.3l9.5-9.3c3-2.4 8-2.4 11 0l9.5 9.3h-7.5l-6.5-3-6.5 3z" fill="#2e2e2e"/>
<path d="M345 625l9-10h10l9 10h-7.5l-6.5-3-6.5 3z" fill="#2e2e2e"/>
<!-- cap icons -->
<rect x="436" y="565.2" width="26" height="8.6" fill="#2a2a38"/>
<rect x="437.5" y="568.3" width="23" height="2.4" rx="1" fill="#f2f2ff" stroke="#2a2a38" stroke-width="0.6"/>
<path d="M437.5 590.4h27v8.4h-27a4.2 4.2 0 0 1 0-8.4z" fill="#2a2a38"/>
<path d="M437 594.6h25" stroke="#e0d8f0" stroke-width="1"/><rect x="436" y="593" width="3.2" height="3.2" fill="#e4e4f4"/>
<rect x="433.3" y="614.4" width="31" height="8.8" fill="#2a2a38"/>
<path d="M437 618.8h25" stroke="#e0d8f0" stroke-width="1"/><rect x="436" y="617.2" width="3.2" height="3.2" fill="#e4e4f4"/>
<!-- degree -->
<circle cx="471" cy="512" r="2.2" fill="none" stroke="#333" stroke-width="1"/>
<circle cx="563.3" cy="533.6" r="2.2" fill="none" stroke="#333" stroke-width="1"/>
<!-- checkmark -->
<path d="M490.5 608.5l2.5 3.5 5-8" fill="none" stroke="#3c4a88" stroke-width="1.6"/>
<!-- blue highlight box -->
<rect x="461" y="580.5" width="122.5" height="50.5" fill="none" stroke="#3393e0" stroke-width="7"/>
<!-- arrow -->
<path d="M603.9 619.5L623.2 591.8 628 596.3 678.7 560.1 635 605.8 624.9 611.9 709.1 605.1 626.8 622 627.4 627.3z" fill="#3393e0"/>
</svg>
</body></html>
